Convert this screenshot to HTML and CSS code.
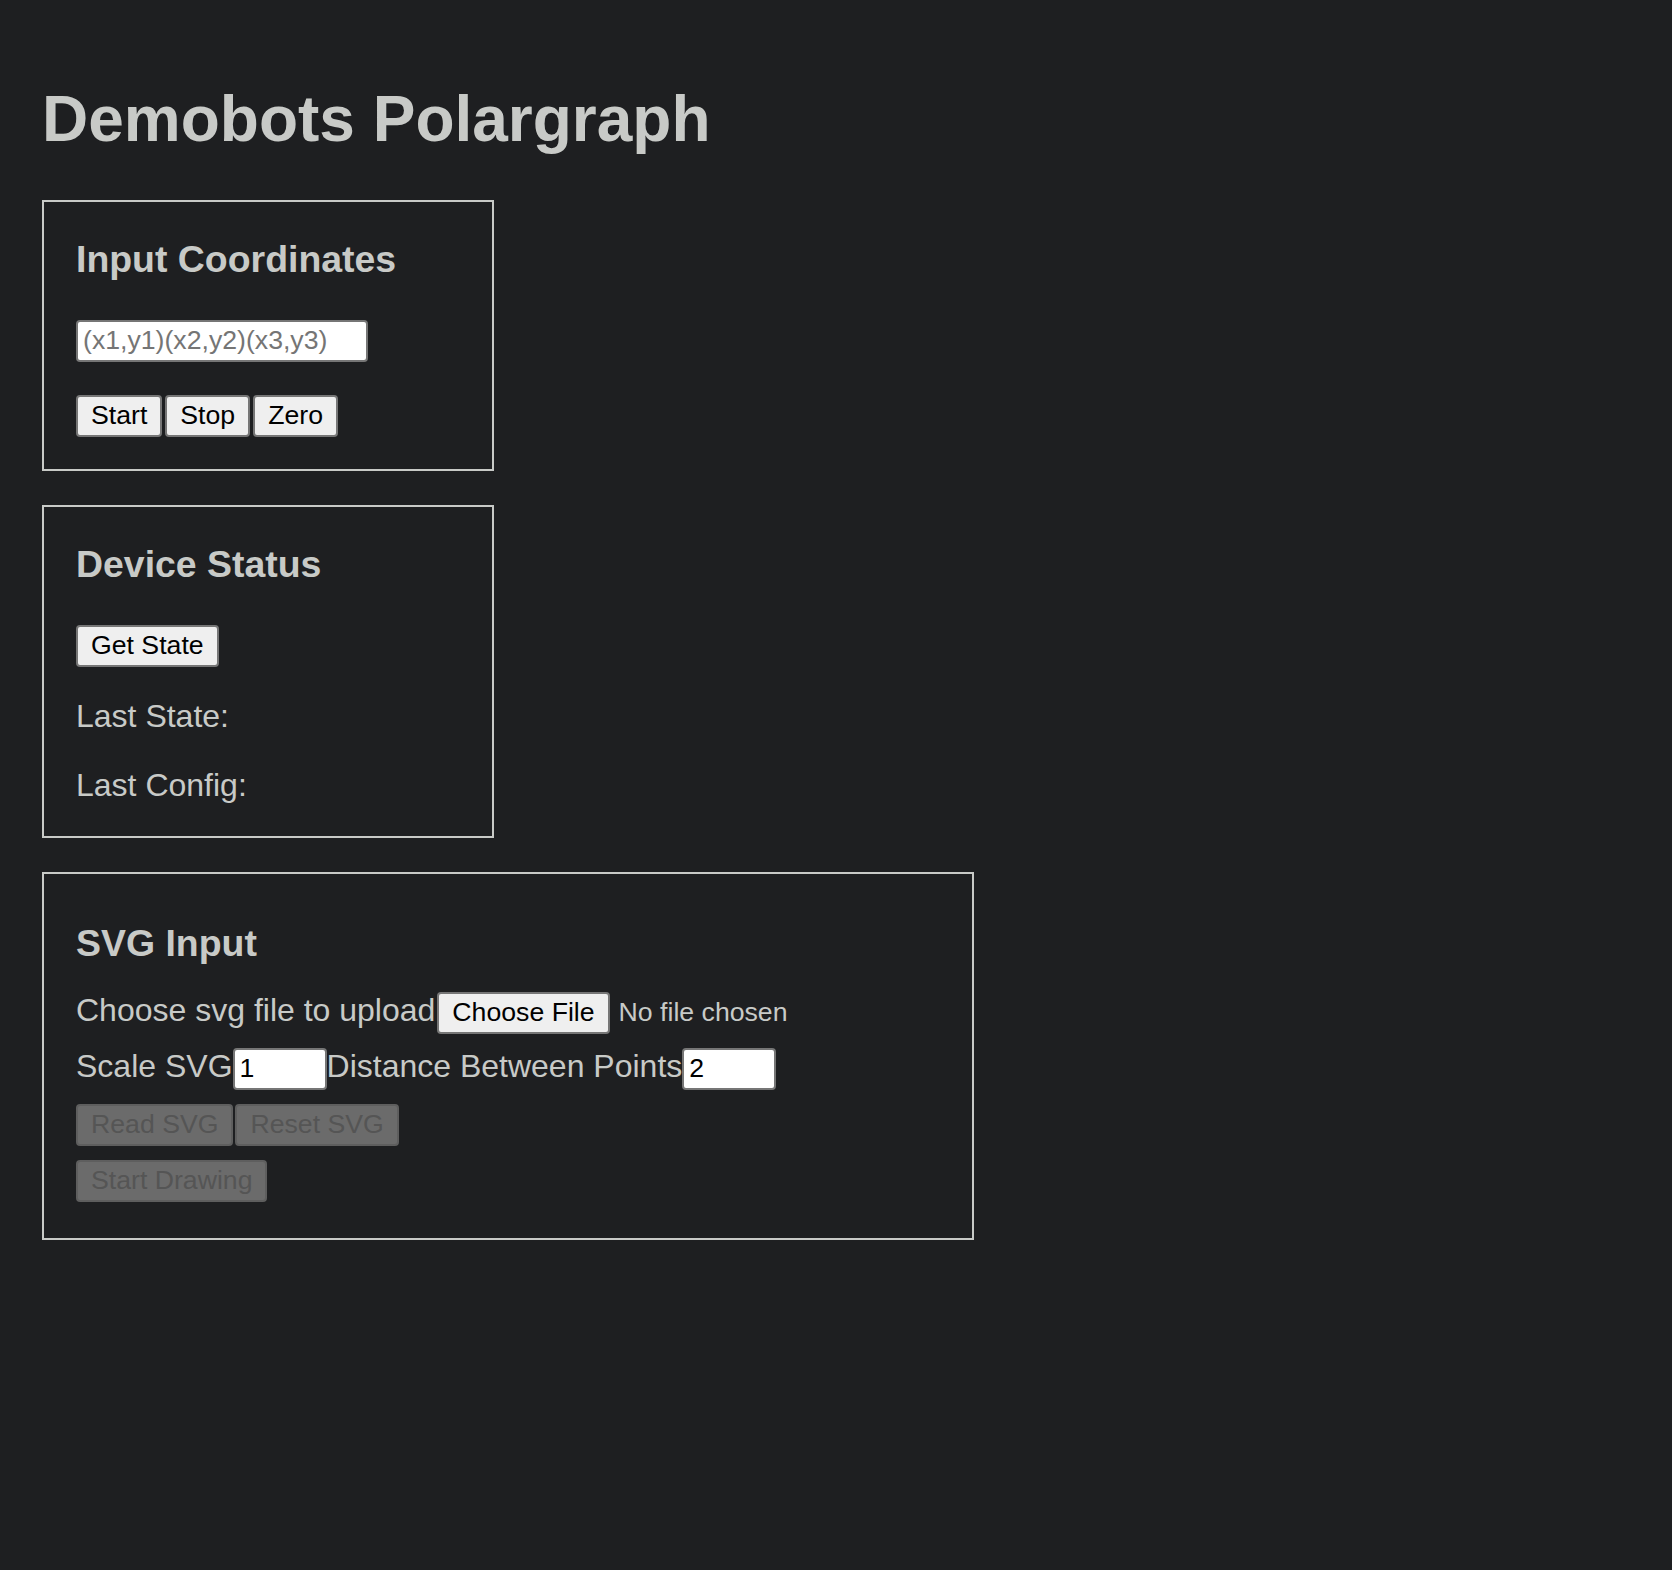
FILE: index.html
```html
<!DOCTYPE html>
<html lang="en">
<head>
<meta charset="utf-8">
<title>Demobots Polargraph</title>
<link rel="stylesheet" href="styles.css">
</head>
<body>
<h1 class="title">Demobots Polargraph</h1>

<section class="card card-narrow">
  <h3 class="card-title">Input Coordinates</h3>
  <input class="field field-coords" type="text" placeholder="(x1,y1)(x2,y2)(x3,y3)">
  <div class="btn-row btn-row-spaced">
    <button class="btn">Start</button>
    <button class="btn">Stop</button>
    <button class="btn">Zero</button>
  </div>
</section>

<section class="card card-narrow">
  <h3 class="card-title">Device Status</h3>
  <div class="btn-row">
    <button class="btn">Get State</button>
  </div>
  <p class="status-line status-first">Last State:</p>
  <p class="status-line">Last Config:</p>
</section>

<section class="card card-wide">
  <h3 class="card-title card-title-svg">SVG Input</h3>
  <div class="svg-rows">
    <div class="svg-row">
      <span class="label">Choose svg file to upload</span>
      <button class="btn btn-file">Choose File</button>
      <span class="file-note">No file chosen</span>
    </div>
    <div class="svg-row">
      <span class="label">Scale SVG</span>
      <input class="field field-small" type="text" value="1">
      <span class="label">Distance Between Points</span>
      <input class="field field-small" type="text" value="2">
    </div>
    <div class="svg-row btn-row">
      <button class="btn" disabled>Read SVG</button>
      <button class="btn" disabled>Reset SVG</button>
    </div>
    <div class="svg-row btn-row">
      <button class="btn" disabled>Start Drawing</button>
    </div>
  </div>
</section>
</body>
</html>
```

FILE: styles.css
```css
html, body {
  background: #1e1f21;
}

body {
  margin: 0;
  padding: 40px 42px;
  color: #c8cac7;
  font-family: "Liberation Sans", Arial, Helvetica, sans-serif;
  font-size: 32px;
  line-height: 1.15;
}

.title {
  font-size: 64px;
  font-weight: bold;
  line-height: 73.6px;
  margin: 43px 0 43px;
}

.card {
  box-sizing: border-box;
  border: 2px solid #c8cac7;
  padding: 0 32px 32px;
  margin-bottom: 34px;
}

.card-narrow {
  width: 452px;
}

.card-wide {
  width: 932px;
  padding-bottom: 36px;
}

.card-title {
  font-size: 37.44px;
  font-weight: bold;
  line-height: 43px;
  margin: 36px 0 0;
}

.card-title-svg {
  margin-top: 48px;
}

.field {
  box-sizing: border-box;
  display: block;
  height: 42px;
  border: 2px solid #767676;
  border-radius: 4px;
  background: #ffffff;
  color: #000000;
  font-family: "Liberation Sans", Arial, Helvetica, sans-serif;
  font-size: 26.67px;
  padding: 0 5px;
  margin: 0;
  outline: none;
}

.field::placeholder {
  color: #757575;
}

.field-coords {
  width: 292px;
  margin-top: 39px;
}

.field-small {
  width: 94px;
}

.btn-row {
  display: flex;
  gap: 3px;
  margin-top: 39px;
}

.btn-row-spaced {
  margin-top: 33px;
}

.btn {
  box-sizing: border-box;
  height: 42px;
  padding: 0 13px;
  border: 2px solid #767676;
  border-radius: 4px;
  background: #efefef;
  color: #000000;
  font-family: "Liberation Sans", Arial, Helvetica, sans-serif;
  font-size: 26.67px;
  line-height: 1;
  margin: 0;
}

.btn:disabled {
  background: #6b6b6b;
  border-color: #5e5e5e;
  color: #555555;
}

.status-line {
  margin: 32px 0 0;
  line-height: 37px;
}

.status-first {
  margin-top: 31px;
}

.svg-rows {
  display: flex;
  flex-direction: column;
  gap: 14px;
  margin-top: 27px;
}

.svg-row {
  display: flex;
  align-items: baseline;
  margin: 0;
}

.svg-row.btn-row {
  gap: 2px;
}

.label {
  white-space: nowrap;
}

.btn-file {
  margin-left: 2px;
}

.file-note {
  font-size: 26.67px;
  margin-left: 9px;
}
```
